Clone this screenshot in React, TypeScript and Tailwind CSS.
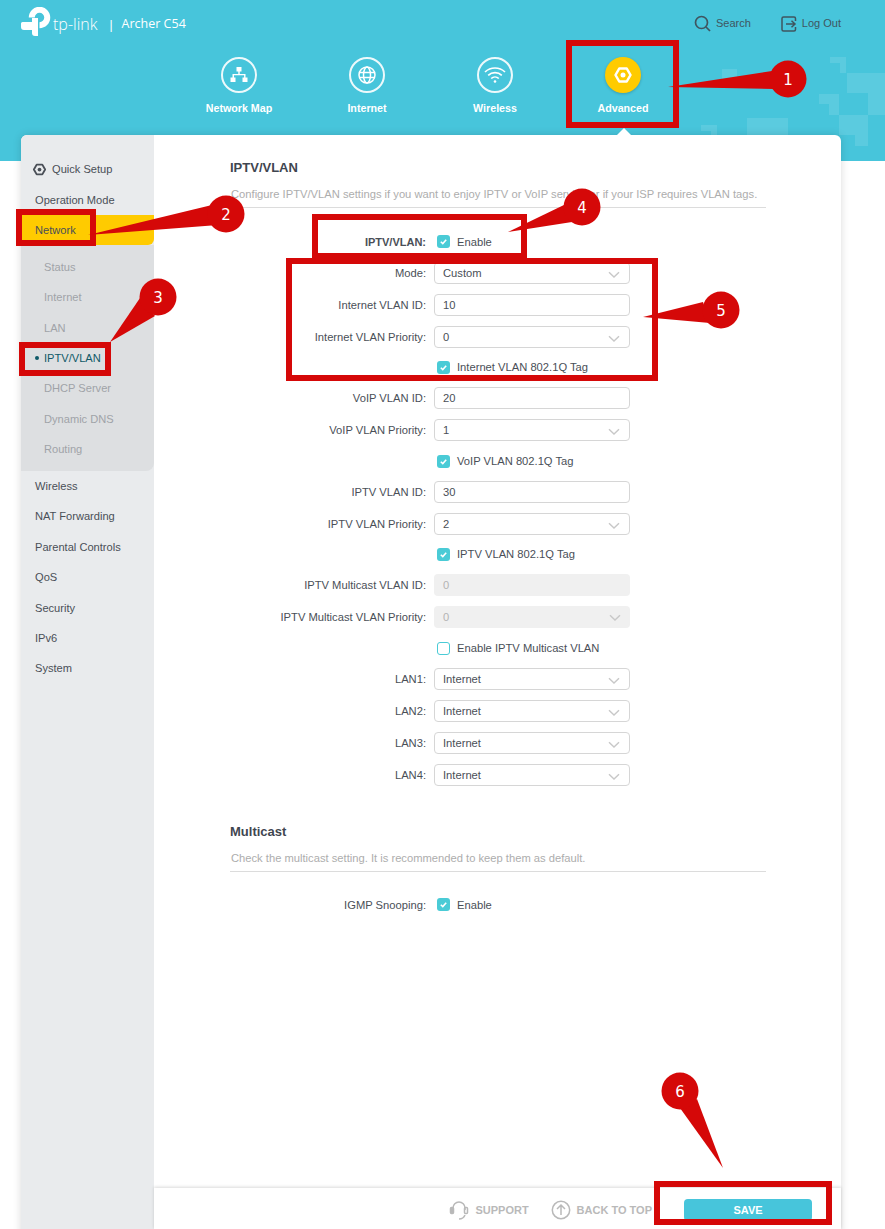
const labelSelect = (label: string, value: string, disabled = false) => ({ kind: "select" as const, label, value, disabled });
const labelInput = (label: string, value: string, disabled = false) => ({ kind: "input" as const, label, value, disabled });
const check = (text: string, checked = true, short = false) => ({ kind: "check" as const, text, checked, short });

const rows = [
  labelSelect("Mode:", "Custom"),
  labelInput("Internet VLAN ID:", "10"),
  labelSelect("Internet VLAN Priority:", "0"),
  check("Internet VLAN 802.1Q Tag", true, true),
  labelInput("VoIP VLAN ID:", "20"),
  labelSelect("VoIP VLAN Priority:", "1"),
  check("VoIP VLAN 802.1Q Tag"),
  labelInput("IPTV VLAN ID:", "30"),
  labelSelect("IPTV VLAN Priority:", "2"),
  check("IPTV VLAN 802.1Q Tag", true, true),
  labelInput("IPTV Multicast VLAN ID:", "0", true),
  labelSelect("IPTV Multicast VLAN Priority:", "0", true),
  check("Enable IPTV Multicast VLAN", false),
  labelSelect("LAN1:", "Internet"),
  labelSelect("LAN2:", "Internet"),
  labelSelect("LAN3:", "Internet"),
  labelSelect("LAN4:", "Internet"),
];

const subMenu = ["Status", "Internet", "LAN", "IPTV/VLAN", "DHCP Server", "Dynamic DNS", "Routing"];
const lowerMenu = ["Wireless", "NAT Forwarding", "Parental Controls", "QoS", "Security", "IPv6", "System"];

function GearIcon({ color, size }: { color: string; size: number }) {
  return (
    <svg width={size} height={size} viewBox="0 0 24 24" fill="none">
      <path d="M3 12 7.500 4.200H16.500L21 12 16.500 19.800H7.500Z" stroke={color} strokeWidth="3" strokeLinejoin="round" />
      <circle cx="12" cy="12" r="3" fill={color} />
    </svg>
  );
}

function Checkbox({ checked }: { checked: boolean }) {
  return checked ? (
    <span className="flex h-[13px] w-[13px] shrink-0 items-center justify-center rounded-[3px] bg-[#4acbd6]">
      <svg width="9" height="9" viewBox="0 0 10 10" fill="none">
        <path d="M2 5.200 4.200 7.300 8 3" stroke="white" strokeWidth="1.700" />
      </svg>
    </span>
  ) : (
    <span className="h-[13px] w-[13px] shrink-0 rounded-[3px] border border-[#4acbd6] bg-white" />
  );
}

function Chevron({ color }: { color: string }) {
  return (
    <svg width="12" height="8" viewBox="0 0 12 8" fill="none" className="absolute right-[9px] top-[8px]">
      <path d="M1 1.200 6 6 11 1.200" stroke={color} strokeWidth="1.400" />
    </svg>
  );
}

function Field({ value, disabled, select }: { value: string; disabled: boolean; select: boolean }) {
  return (
    <div
      className={
        disabled
          ? "relative flex h-[22px] w-[196px] items-center rounded-[4px] bg-[#f0f0f0] pl-[9px] text-[#b4b4b4]"
          : "relative flex h-[22px] w-[196px] items-center rounded-[4px] border border-[#d6d6d6] bg-white pl-2 text-[#4a4f57]"
      }
    >
      {value}
      {select && <Chevron color="#c8c8c8" />}
    </div>
  );
}

function Annotations() {
  const red = "#d50808";
  const badges: [number, number, string][] = [
    [788, 79, "1"],
    [226, 214, "2"],
    [158, 297, "3"],
    [582, 207, "4"],
    [721, 310, "5"],
    [680, 1091, "6"],
  ];
  return (
    <svg width="885" height="1229" viewBox="0 0 885 1229" className="pointer-events-none absolute left-0 top-0">
      <g fill="none" stroke={red} strokeWidth="6">
        <rect x="569" y="43" width="107" height="82" />
        <rect x="19" y="212" width="74" height="31" />
        <rect x="22" y="345" width="86" height="28" />
        <rect x="315" y="217" width="209" height="39" />
        <rect x="289" y="261" width="366" height="117" />
        <rect x="657" y="1184" width="172" height="38" />
      </g>
      <path d="M668 87 772 71 774 89Z" fill={red} />
      <path d="M88 235 212 205 218 225Z" fill={red} />
      <path d="M110 342 140 298 155 316Z" fill={red} />
      <path d="M508 232 566 204 572 222Z" fill={red} />
      <path d="M643 317 703 302 710 323Z" fill={red} />
      <path d="M723 1168 680 1108 697 1099Z" fill={red} />
      {badges.map(([cx, cy, n]) => (
        <g key={n}>
          <circle cx={cx} cy={cy} r="18.500" fill={red} />
          <text x={cx} y={cy + 5.5} textAnchor="middle" fill="white" fontSize="15" fontFamily="'DejaVu Sans', sans-serif">
            {n}
          </text>
        </g>
      ))}
    </svg>
  );
}

function NavItem({ label, active, children }: { label: string; active?: boolean; children?: React.ReactNode }) {
  return (
    <div className="flex w-[128px] flex-col items-center">
      <div
        className={
          active
            ? "flex h-9 w-9 items-center justify-center rounded-full bg-[#ffcb00] shadow-[0_1px_3px_rgba(0,0,0,0.2)]"
            : "flex h-9 w-9 items-center justify-center rounded-full border-2 border-white/90"
        }
      >
        {children}
      </div>
      <span className="mt-[7px] text-[10.700px] font-bold leading-[16px] text-white">{label}</span>
    </div>
  );
}

export default function App() {
  return (
    <div className="relative h-[1229px] w-[885px] overflow-hidden bg-white font-['Liberation_Sans',Arial,sans-serif] text-[11.200px] text-[#4a4f57]">
      <header className="relative h-[161px] bg-[#47c5db]">
        <svg width="205" height="161" viewBox="0 0 205 161" className="absolute left-[680px] top-0" fill="white" fillOpacity="0.11">
          <path d="M150 57h16v16h-6V63h-10zM167 73h38v42h-17V93h-21zM139 94h20v21h-10v-11h-10zM159 115h29v31h-13V135h-16z" />
          <path d="M67 118h41v40h-41zM21 125h16v20h-6v-14h-10zM42 69h15v12h-15z" />
        </svg>
        <div className="relative flex items-start justify-between pl-[21px] pr-[44px] pt-[7px]">
          <div className="flex items-center text-white">
            <svg width="30" height="29" viewBox="0 0 30 29" fill="white">
              <path d="M10.750 10.500A7.750 7.750 0 1 1 18.500 18.250" fill="none" stroke="white" strokeWidth="6" />
              <path d="M11 11h6v18h-3a3 3 0 0 1-3-3Z" />
              <path d="M0 16.500a1.500 1.500 0 0 1 1.500-1.500H12v8H3a3 3 0 0 1-3-3Z" />
            </svg>
            <span className="ml-[2px] mt-[5px] font-['Open_Sans',sans-serif] text-[16px] font-light leading-none">tp-link</span>
            <span className="ml-[12px] mt-[6px] text-[12px] leading-none">|</span>
            <span className="ml-[9px] mt-[6px] font-['Open_Sans',sans-serif] text-[12.500px] leading-none">Archer C54</span>
          </div>
          <div className="mt-[8px] flex items-center text-[11px] text-[#3f5560]">
            <svg width="17" height="17" viewBox="0 0 17 17" fill="none" stroke="#3f5560" strokeWidth="1.700">
              <circle cx="7.500" cy="7.500" r="6" />
              <path d="m12 12 4 4" />
            </svg>
            <span className="ml-[5px]">Search</span>
            <svg width="16" height="16" viewBox="0 0 16 16" fill="none" stroke="#3f5560" strokeWidth="1.500" className="ml-[30px]">
              <path d="M14.500 5V2.500a1.500 1.500 0 0 0-1.500-1.500H2.500A1.500 1.500 0 0 0 1 2.500v11A1.500 1.500 0 0 0 2.500 15H13a1.500 1.500 0 0 0 1.500-1.500V11M5 8h9M10.500 4.800 14 8l-3.500 3.200" />
            </svg>
            <span className="ml-[5px]">Log Out</span>
          </div>
        </div>
        <nav className="relative ml-[175px] mt-[21px] flex">
          <NavItem label="Network Map">
            <svg width="20" height="18" viewBox="0 0 20 18" fill="white">
              <path d="M7.500 1h5v4.500h-5zM1.500 11.500h5V16h-5zM13.500 11.500h5V16h-5z" />
              <path d="M9.300 5h1.400v3h5.800v4h-1.400V9.300H5v2.700H3.500V8h5.800z" />
            </svg>
          </NavItem>
          <NavItem label="Internet">
            <svg width="20" height="20" viewBox="0 0 20 20" fill="none" stroke="white" strokeWidth="1.500">
              <circle cx="10" cy="10" r="8" />
              <ellipse cx="10" cy="10" rx="3.500" ry="8" />
              <path d="M2 7.500h16M2 12.500h16" />
            </svg>
          </NavItem>
          <NavItem label="Wireless">
            <svg width="22" height="18" viewBox="0 0 22 18" fill="none" stroke="white" strokeWidth="1.700">
              <path d="M1 6a14.500 14.500 0 0 1 20 0M4.200 9.300a10 10 0 0 1 13.600 0M7.200 12.500a5.500 5.500 0 0 1 7.600 0" />
              <circle cx="11" cy="15.500" r="1.300" fill="white" stroke="none" />
            </svg>
          </NavItem>
          <NavItem label="Advanced" active>
            <GearIcon color="white" size={20} />
          </NavItem>
        </nav>
      </header>

      <div className="absolute left-[21px] top-[135px] flex h-[1200px] w-[820px] rounded-t-[6px] bg-white shadow-[0_0_8px_rgba(0,0,0,0.15)]">
        <span className="absolute left-[596px] top-[-7px] h-0 w-0 border-x-[7px] border-b-[7px] border-x-transparent border-b-white" />
        <aside className="w-[133px] shrink-0 rounded-tl-[6px] bg-[#e9ebed] pt-[19.300px] text-[11.100px]">
          <div className="flex h-[30.400px] items-center pl-[11px]">
            <GearIcon color="#4a4f57" size={15} />
            <span className="ml-[5px]">Quick Setup</span>
          </div>
          <div className="flex h-[30.400px] items-center pl-[14px]">Operation Mode</div>
          <div className="flex h-[30.400px] items-center rounded-br-[6px] bg-[#ffcb00] pl-[14px]">Network</div>
          <div className="rounded-br-[8px] bg-[#dddfe1] py-[6.500px]">
            {subMenu.map((item) => (
              <div
                key={item}
                className={
                  item === "IPTV/VLAN"
                    ? "relative flex h-[30.400px] items-center pl-[23px] text-[#0f5a68]"
                    : "flex h-[30.400px] items-center pl-[23px] text-[#a0a3a8]"
                }
              >
                {item === "IPTV/VLAN" && <span className="absolute left-[14px] h-[4px] w-[4px] rounded-full bg-[#0f5a68]" />}
                {item}
              </div>
            ))}
          </div>
          {lowerMenu.map((item) => (
            <div key={item} className="flex h-[30.400px] items-center pl-[14px]">
              {item}
            </div>
          ))}
        </aside>

        <main className="relative flex-1 pl-[76px] pr-[75px]">
          <h1 className="mt-[24px] text-[13px] font-bold leading-[17px] text-[#3f4650]">IPTV/VLAN</h1>
          <p className="mt-[12px] border-b border-[#dcdcdc] pb-[6px] pl-px leading-[13px] text-[#adadad]">
            Configure IPTV/VLAN settings if you want to enjoy IPTV or VoIP service or if your ISP requires VLAN tags.
          </p>
          <div className="mt-[19px]">
            <div className="flex h-[30px] items-center">
              <span className="w-[196px] text-right text-[11px] font-bold">IPTV/VLAN:</span>
              <span className="ml-[11px] flex items-center gap-[7px]">
                <Checkbox checked />
                Enable
              </span>
            </div>
            {rows.map((row, i) =>
              row.kind === "check" ? (
                <div key={i} className={row.short ? "flex h-[29px] items-center pl-[207px]" : "flex h-[30px] items-center pl-[207px]"}>
                  <Checkbox checked={row.checked} />
                  <span className="ml-[7px]">{row.text}</span>
                </div>
              ) : (
                <div key={i} className="flex h-8 items-center">
                  <span className="w-[196px] text-right">{row.label}</span>
                  <div className="ml-2">
                    <Field value={row.value} disabled={row.disabled} select={row.kind === "select"} />
                  </div>
                </div>
              ),
            )}
          </div>

          <h2 className="mt-[32px] text-[13px] font-bold leading-[17px] text-[#3f4650]">Multicast</h2>
          <p className="mt-[12px] border-b border-[#dcdcdc] pb-[6px] pl-px leading-[13px] text-[#adadad]">
            Check the multicast setting. It is recommended to keep them as default.
          </p>
          <div className="mt-[18px] flex h-[30px] items-center">
            <span className="w-[196px] text-right">IGMP Snooping:</span>
            <span className="ml-[11px] flex items-center gap-[7px]">
              <Checkbox checked />
              Enable
            </span>
          </div>
        </main>
      </div>

      <footer className="absolute left-[154px] top-[1188px] flex h-[41px] w-[687px] items-center justify-end bg-white pr-[29px] pt-[3px] text-[11px] font-bold text-[#b9b9b9] shadow-[0_-1px_3px_rgba(0,0,0,0.15)]">
        <svg width="20" height="20" viewBox="0 0 20 20" fill="none" stroke="#b9b9b9" strokeWidth="1.500">
          <path d="M4 10V8a6 6 0 0 1 12 0v2M10 19c3 0 5-1.500 6-4" />
          <rect x="1.500" y="7.500" width="3" height="6" rx="1" fill="#b9b9b9" />
          <rect x="15.500" y="7.500" width="3" height="6" rx="1" />
        </svg>
        <span className="ml-[6px]">SUPPORT</span>
        <svg width="20" height="20" viewBox="0 0 20 20" fill="none" stroke="#b9b9b9" strokeWidth="1.500" className="ml-[22px]">
          <circle cx="10" cy="10" r="8.700" />
          <path d="M10 15V5.500M6 9l4-4 4 4" />
        </svg>
        <span className="ml-[6px]">BACK TO TOP</span>
        <button className="ml-[32px] h-[22px] w-[128px] rounded-[4px] bg-[#47c5db] text-[11px] font-bold text-white">SAVE</button>
      </footer>

      <Annotations />
    </div>
  );
}
